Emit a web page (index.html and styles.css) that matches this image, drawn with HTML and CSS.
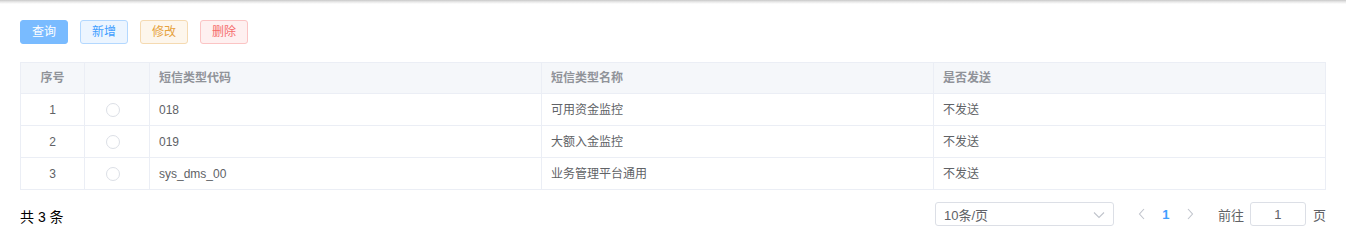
FILE: index.html
```html
<!DOCTYPE html>
<html lang="zh-CN">
<head>
<meta charset="utf-8">
<title>短信类型</title>
<link rel="stylesheet" href="styles.css">
</head>
<body>
<div class="topbar"></div>
<div class="page">
  <div class="toolbar">
    <button class="btn btn-primary">查询</button>
    <button class="btn btn-blue">新增</button>
    <button class="btn btn-warn">修改</button>
    <button class="btn btn-danger">删除</button>
  </div>
  <table class="grid">
    <colgroup>
      <col class="c-idx"><col class="c-radio"><col class="c-code"><col class="c-name"><col>
    </colgroup>
    <thead>
      <tr><th class="center">序号</th><th></th><th>短信类型代码</th><th>短信类型名称</th><th>是否发送</th></tr>
    </thead>
    <tbody>
      <tr><td class="center">1</td><td class="center"><span class="radio"></span></td><td>018</td><td>可用资金监控</td><td>不发送</td></tr>
      <tr><td class="center">2</td><td class="center"><span class="radio"></span></td><td>019</td><td>大额入金监控</td><td>不发送</td></tr>
      <tr><td class="center">3</td><td class="center"><span class="radio"></span></td><td>sys_dms_00</td><td>业务管理平台通用</td><td>不发送</td></tr>
    </tbody>
  </table>
  <div class="footer">
    <div class="total">共 3 条</div>
    <div class="pager">
      <div class="select">
        <span>10条/页</span>
        <svg class="caret" width="12" height="8" viewBox="0 0 12 8"><polyline points="1,1.5 6,6.5 11,1.5" fill="none" stroke="#c0c4cc" stroke-width="1.1"/></svg>
      </div>
      <span class="pbtn"><svg width="8" height="12" viewBox="0 0 8 12"><polyline points="6,1 1.5,6 6,11" fill="none" stroke="#c0c4cc" stroke-width="1.1"/></svg></span>
      <span class="pbtn num">1</span>
      <span class="pbtn"><svg width="8" height="12" viewBox="0 0 8 12"><polyline points="2,1 6.5,6 2,11" fill="none" stroke="#c0c4cc" stroke-width="1.1"/></svg></span>
      <span class="jump">前往</span>
      <span class="jinput">1</span>
      <span class="jump-end">页</span>
    </div>
  </div>
</div>
</body>
</html>
```
FILE: styles.css
```css
* { box-sizing: border-box; }
html, body { margin: 0; padding: 0; background: #fff; }
body {
  font-family: "Liberation Sans", "Noto Sans CJK SC", sans-serif;
  color: #606266;
  width: 1346px;
}
.topbar {
  height: 4px;
  background: linear-gradient(#c8c8c8, #e4e4e4 40%, #fff);
}
.page { padding: 16px 20px 0 20px; }
.toolbar { display: flex; gap: 12px; height: 24px; }
.btn {
  width: 48px;
  height: 24px;
  border: 1px solid;
  border-radius: 3px;
  font-family: inherit;
  font-size: 12px;
  line-height: 22px;
  padding: 0;
  cursor: pointer;
}
.btn-primary { background: #79bbff; border-color: #79bbff; color: #fff; }
.btn-blue { background: #ecf5ff; border-color: #b3d8ff; color: #409eff; }
.btn-warn { background: #fdf6ec; border-color: #f5dab1; color: #e6a23c; }
.btn-danger { background: #fef0f0; border-color: #fbc4c4; color: #f56c6c; }

.grid {
  margin-top: 18px;
  width: 1306px;
  border-collapse: collapse;
  table-layout: fixed;
  font-size: 12px;
}
.c-idx { width: 64px; }
.c-radio { width: 65px; }
.c-code { width: 392px; }
.c-name { width: 392px; }
.grid th, .grid td {
  border: 1px solid #ebeef5;
  height: 32px;
  padding: 0 9px;
  text-align: left;
  vertical-align: middle;
  line-height: 20px;
}
.grid th {
  height: 31px;
  background: #f5f7fa;
  color: #909399;
  font-weight: bold;
}
.grid td { color: #606266; }
.grid .center { text-align: center; padding: 0; }
.radio {
  display: inline-block;
  width: 14px;
  height: 14px;
  border: 1px solid #dcdfe6;
  border-radius: 50%;
  vertical-align: middle;
  margin-right: 8px;
}

.footer {
  display: flex;
  justify-content: space-between;
  align-items: center;
  margin-top: 12px;
  height: 24px;
}
.total { font-size: 14px; color: #000; padding-top: 3px; }
.pager { display: flex; align-items: center; font-size: 13px; color: #606266; }
.select {
  width: 179px;
  height: 24px;
  border: 1px solid #dcdfe6;
  border-radius: 3px;
  display: flex;
  align-items: center;
  justify-content: space-between;
  padding: 0 8px 0 8px;
  color: #606266;
  margin-right: 16px;
}
.caret { margin-top: 1px; }
.pbtn {
  width: 24px;
  height: 24px;
  display: flex;
  align-items: center;
  justify-content: center;
}
.pbtn.num { color: #409eff; font-weight: bold; }
.jump { margin-left: 16px; }
.jinput {
  width: 56px;
  height: 24px;
  border: 1px solid #dcdfe6;
  border-radius: 3px;
  margin-left: 6px;
  display: flex;
  align-items: center;
  justify-content: center;
}
.jump-end { margin-left: 7px; }
```
